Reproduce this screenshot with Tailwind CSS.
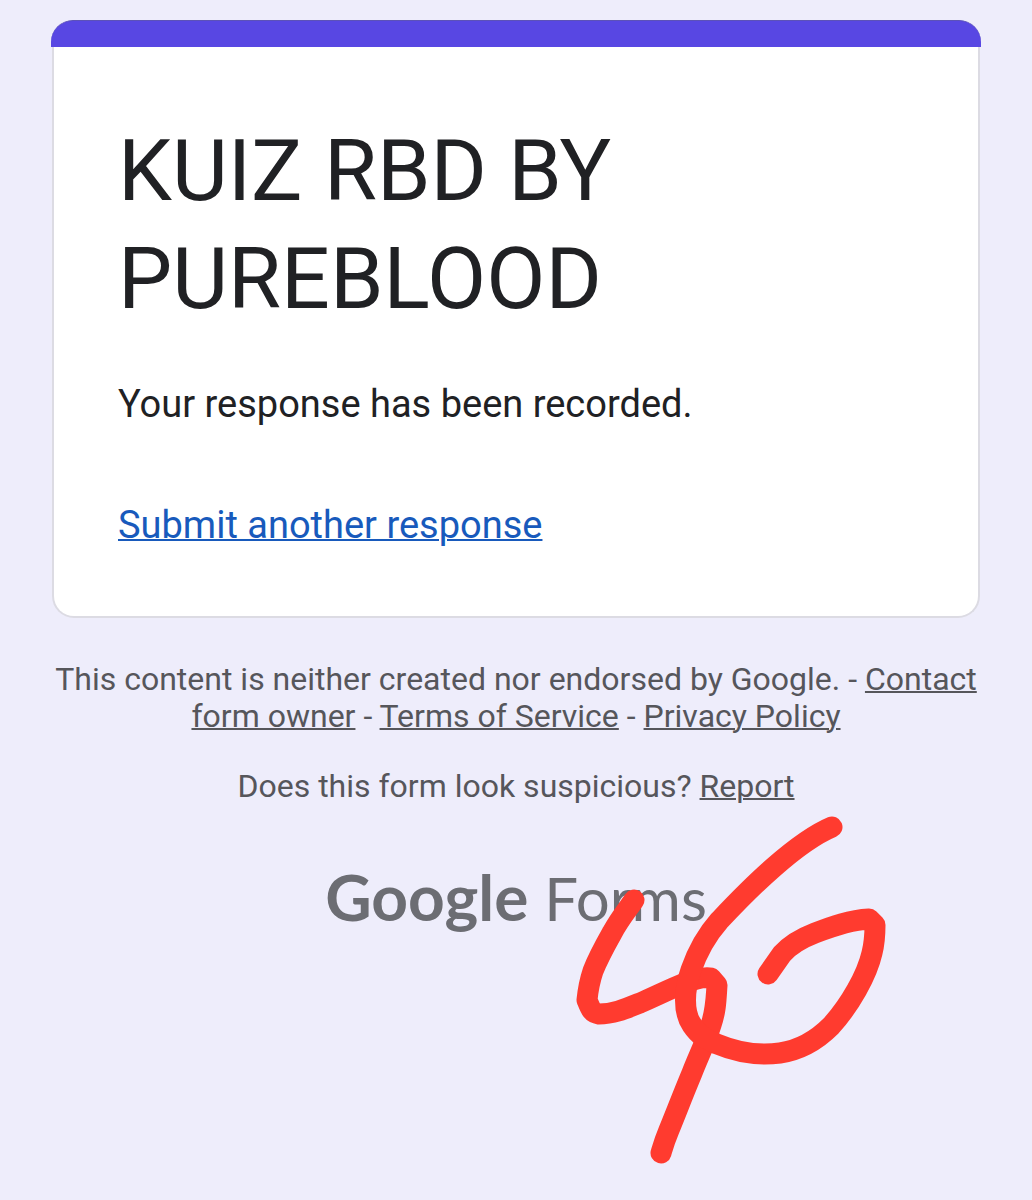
<!DOCTYPE html>
<html lang="en">
<head>
<meta charset="utf-8">
<meta name="viewport" content="width=device-width, initial-scale=1">
<title>KUIZ RBD BY PUREBLOOD</title>
<script src="https://cdn.jsdelivr.net/npm/@tailwindcss/browser@4"></script>
</head>
<body class="relative min-h-screen overflow-x-hidden bg-[#eeedfb] px-[51px] pt-5 font-[Roboto,sans-serif] text-[#202124]">
  <main>
    <div class="h-[27px] rounded-t-[22px] border-t border-[#5c52b8] bg-[#5847e3]"></div>
    <section class="mx-px rounded-b-[22px] border-x-2 border-b-2 border-[#dcdbe3] bg-white px-16 pt-[70px] pb-[66px]">
      <h1 class="text-[86px] leading-[108px]">KUIZ RBD BY PUREBLOOD</h1>
      <p class="mt-[46px] text-[38px] leading-[50px]">Your response has been recorded.</p>
      <p class="mt-[71px] text-[38px] leading-[50px]"><a href="#" class="text-[#185abc] underline decoration-2">Submit another response</a></p>
    </section>
  </main>
  <footer class="text-center text-[32px] leading-[37px] text-[#56565b]">
    <p class="mt-[43px]">This content is neither created nor endorsed by Google. - <a href="#" class="underline decoration-2">Contact form owner</a> - <a href="#" class="underline decoration-2">Terms of Service</a> - <a href="#" class="underline decoration-2">Privacy Policy</a></p>
    <p class="mt-[33px]">Does this form look suspicious? <a href="#" class="underline decoration-2">Report</a></p>
    <a href="#" aria-label="Google Forms" class="mt-[52px] flex items-baseline justify-center gap-4 font-[Lato,sans-serif] leading-[80px] text-[#6c6d73]">
      <span class="text-[64px] font-bold">Google</span>
      <span class="text-[60px]">Forms</span>
    </a>
  </footer>
  <svg class="pointer-events-none absolute top-[810px] left-1/2 ml-[54px] h-[370px] w-[330px]" viewBox="570 810 330 370" fill="none" stroke="#ff3b2f" stroke-width="21" stroke-linecap="round" stroke-linejoin="round" aria-hidden="true">
    <path d="M634 900C628 909 620 918 612 933C603 949 598 958 593 971C589 983 588 990 587 1000C591 1010 592 1013 599 1014C613 1014 625 1009 640 1003C656 996 672 988 685 983C700 977 706 977 711 978L717 985C716 1000 716 1010 711 1025C705 1044 699 1055 692 1073C682 1097 676 1113 669 1130C664 1142 663 1146 661 1153"/>
    <path d="M832 827C813 835 790 853 774 867C751 887 736 903 719 921C704 938 697 953 691 970C684 990 683 1012 692 1025C700 1037 708 1040 717 1044C736 1052 757 1056 780 1053C800 1050 817 1040 831 1026C850 1005 867 975 872 953C875 941 875 933 875 925L869 919C850 920 833 926 815 933C802 938 790 945 782 954L768 974"/>
  </svg>
</body>
</html>
